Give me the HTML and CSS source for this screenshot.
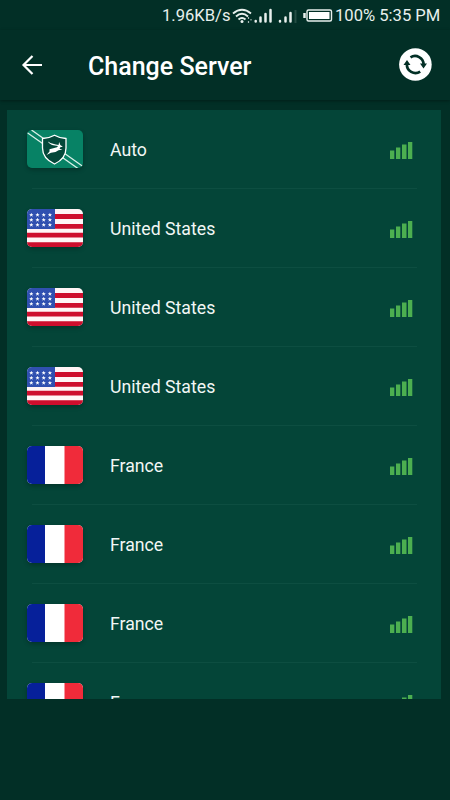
FILE: index.html
```
<!DOCTYPE html>
<html lang="en">
<head>
  <meta charset="UTF-8">
  <title>Change Server</title>
  <link rel="stylesheet" href="styles.css">
</head>
<body>

  <!-- Shared icons -->
  <svg class="sprite" width="0" height="0">
    <symbol id="flag-auto" viewBox="0 0 56 38">
      <rect width="56" height="38" fill="#078265"/>
      <path d="M0 2.500L51 38.500M4.500 0L56 36.500" stroke="#d9efe7" stroke-width="1.300"/>
      <path d="M27.500 5.200C31 7.200 35 8.300 39 8.500V18C39 25.500 34 31 27.500 34C21 31 15.500 25.500 15.500 18V8.500C20 8.300 24 7.200 27.500 5.200Z" fill="#04483a" stroke="#fff" stroke-width="1.300"/>
      <path d="M21 11.500C24 13.800 28 14.300 31.500 15L32.200 12L33.300 15L35.800 16.700L33.300 17.200L32.500 18.700L35.500 19.500L31.500 20.300L28.500 22L24 22.700L19.500 25L22.500 21.500L22.500 19.300L30 17.200L31 16C27 15.600 22.500 15 21 11.500Z" fill="#fff"/>
    </symbol>
    <symbol id="flag-us" viewBox="0 0 56 38">
      <rect width="56" height="38" fill="#fff5f6"/>
      <path d="M0 7.500H56M0 17.300H56M0 26.200H56M0 35.700H56" stroke="#ce0e2d" stroke-width="4.800"/>
      <rect width="28" height="20" fill="#3050b0"/>
      <g id="stars" fill="#fff">
        <path id="star" d="M4.300 3.800L4.900 5.300L6.400 5.300L5.200 6.200L5.700 7.700L4.300 6.800L2.900 7.700L3.400 6.200L2.200 5.300L3.700 5.300Z"/>
        <use href="#star" x="6.200"/>
        <use href="#star" x="12.400"/>
        <use href="#star" x="18.600"/>
      </g>
      <use href="#stars" y="5"/>
      <use href="#stars" y="10"/>
    </symbol>
    <symbol id="flag-fr" viewBox="0 0 56 38">
      <rect width="56" height="38" fill="#fff"/>
      <rect width="18" height="38" fill="#06209a"/>
      <rect x="37.500" width="18.500" height="38" fill="#f02b3a"/>
    </symbol>
    <symbol id="signal" viewBox="0 0 23 17">
      <path d="M0 8.500H4.300V17H0ZM6 5.500H10.300V17H6ZM12 2.500H16.500V17H12ZM18 0H22.300V17H18Z" fill="#4caf50"/>
    </symbol>
  </svg>

  <!-- Status bar -->
  <div class="status-bar">
    <span class="speed">1.96KB/s</span>
    <svg class="status-icons" width="102" height="18" viewBox="0 0 102 18" fill="none" stroke="#e8f0ed">
      <path d="M2 6.500Q11 -1 20 6.500M5 9.500Q11 4 17 9.500M7.500 12.500Q11 9.500 14.500 12.500" stroke-width="1.900"/>
      <circle cx="11" cy="14.500" r="1.500" fill="#e8f0ed" stroke="none"/>
      <path d="M17.500 10V12M17.500 14V16M20 12V13.500" stroke-width="1.200" opacity=".7"/>
      <path d="M24.700 14V14.500M29.500 10.500V14.500M34.500 7V14.500M39.500 3V14.500" stroke-width="2.500" stroke-linecap="round"/>
      <path d="M49 14V14.500M54.500 10.500V14.500M59.500 6V14.500" stroke-width="2.500" stroke-linecap="round"/>
      <path d="M64.500 3V16" stroke-width="2" opacity=".15"/>
      <rect x="76" y="3" width="24.500" height="11" rx="1.500" stroke-width="1.400"/>
      <rect x="78" y="5" width="20.500" height="7" fill="#fff" stroke="none"/>
      <path d="M73.500 6V11" stroke-width="2.500"/>
    </svg>
    <span class="clock">100% 5:35 PM</span>
  </div>

  <!-- Title bar -->
  <div class="header">
    <svg class="back" width="22" height="20" viewBox="0 0 22 20" fill="none" stroke="#fff" stroke-width="2.200">
      <path d="M21 10H2.500M11.500 1L2.500 10L11.500 19"/>
    </svg>
    <h1 class="title">Change Server</h1>
    <svg class="refresh" width="34" height="34" viewBox="0 0 34 34">
      <circle cx="17.400" cy="16.500" r="16.300" fill="#fff"/>
      <path d="M12.500 9.300A8.600 8.600 0 0 1 25.600 16.500M22.200 23.700A8.600 8.600 0 0 1 8.900 16" fill="none" stroke="#033026" stroke-width="2.700"/>
      <path d="M22 15.500H29L25.500 20.500ZM5.500 17H12.500L9 12Z" fill="#033026"/>
    </svg>
  </div>

  <!-- Server list -->
  <div class="server-list">
    <div class="server">
      <svg class="flag"><use href="#flag-auto"/></svg>
      <span class="name">Auto</span>
      <svg class="signal"><use href="#signal"/></svg>
    </div>
    <div class="server">
      <svg class="flag"><use href="#flag-us"/></svg>
      <span class="name">United States</span>
      <svg class="signal"><use href="#signal"/></svg>
    </div>
    <div class="server">
      <svg class="flag"><use href="#flag-us"/></svg>
      <span class="name">United States</span>
      <svg class="signal"><use href="#signal"/></svg>
    </div>
    <div class="server">
      <svg class="flag"><use href="#flag-us"/></svg>
      <span class="name">United States</span>
      <svg class="signal"><use href="#signal"/></svg>
    </div>
    <div class="server">
      <svg class="flag"><use href="#flag-fr"/></svg>
      <span class="name">France</span>
      <svg class="signal"><use href="#signal"/></svg>
    </div>
    <div class="server">
      <svg class="flag"><use href="#flag-fr"/></svg>
      <span class="name">France</span>
      <svg class="signal"><use href="#signal"/></svg>
    </div>
    <div class="server">
      <svg class="flag"><use href="#flag-fr"/></svg>
      <span class="name">France</span>
      <svg class="signal"><use href="#signal"/></svg>
    </div>
    <div class="server">
      <svg class="flag"><use href="#flag-fr"/></svg>
      <span class="name">France</span>
      <svg class="signal"><use href="#signal"/></svg>
    </div>
  </div>

</body>
</html>
```
FILE: styles.css
```
* {
  box-sizing: border-box;
}

html, body {
  margin: 0;
  height: 100%;
  overflow: hidden;
  background: #022f26;
  color: #f2f7f5;
  font-family: Roboto, "Liberation Sans", sans-serif;
}

.sprite {
  display: block;
}

/* Status bar */
.status-bar {
  display: flex;
  align-items: center;
  height: 30px;
  padding: 1px 0 0 162px;
  font-size: 16.6px;
  line-height: 30px;
  color: #e8f0ed;
  white-space: nowrap;
}

.speed {
  width: 70px;
}

.status-icons {
  flex: none;
  margin-left: -1px;
}

.clock {
  margin-left: 2px;
}

/* Title bar */
.header {
  display: flex;
  align-items: center;
  height: 70px;
  padding: 0 18px 0 21px;
  box-shadow: 0 1px 3px rgba(0, 0, 0, 0.35);
}

.title {
  flex: 1;
  margin: 2px 0 0 45px;
  font-size: 25px;
  font-weight: 500;
  color: #fff;
}

/* Server list */
.server-list {
  height: 589px;
  margin: 10px 9px 0 7px;
  overflow: hidden;
  background: #044538;
}

.server {
  display: flex;
  align-items: center;
  height: 79px;
  padding: 0 28px 1px 20px;
  background: linear-gradient(#0d4e41, #0d4e41) 25px 100% / 385px 1px no-repeat;
}

.flag {
  width: 56px;
  height: 38px;
  border-radius: 5px;
  box-shadow: 0 2px 4px rgba(0, 0, 0, 0.25);
}

.name {
  flex: 1;
  margin: 2px 0 0 27px;
  font-size: 17.7px;
}

.signal {
  width: 23px;
  height: 17px;
  margin-top: 2px;
}
```
